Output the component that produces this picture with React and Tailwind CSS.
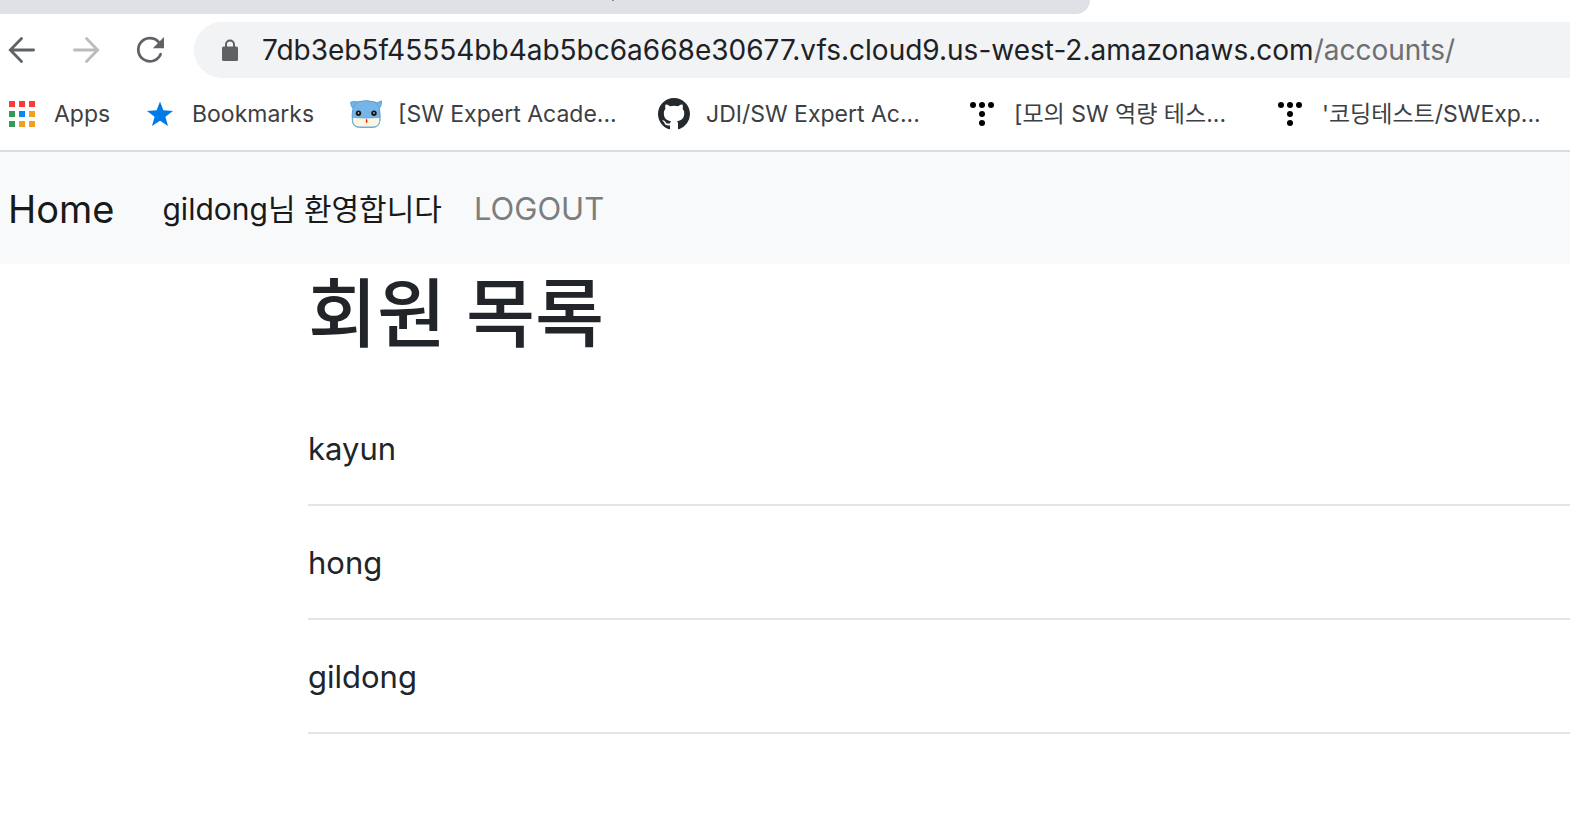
import React from "react";

function BackIcon() {
  return (
    <svg width="28" height="28" viewBox="0 0 28 28" fill="none" stroke="#5f6368" strokeWidth="2.8" strokeLinecap="round">
      <path d="M25.600 14H3M13.500 2.600 2.300 14l11.200 11.400" />
    </svg>
  );
}

function ForwardIcon() {
  return (
    <svg width="28" height="28" viewBox="0 0 28 28" fill="none" stroke="#babcbe" strokeWidth="2.8" strokeLinecap="round">
      <path d="M2.400 14h23M14.500 2.600 25.700 14 14.500 25.400" />
    </svg>
  );
}

function ReloadIcon() {
  return (
    <svg width="28" height="28" viewBox="0 0 28 28" fill="none">
      <path d="M22.4 5.8A11.6 11.6 0 1 0 24.600 18.200" stroke="#5f6368" strokeWidth="2.8" strokeLinecap="round" />
      <path d="M28 1V12.300H16.800Z" fill="#5f6368" />
    </svg>
  );
}

function LockIcon() {
  return (
    <svg width="16" height="22" viewBox="0 0 16 22" fill="none" className="shrink-0">
      <path d="M4 8V5.500a4 4 0 0 1 8 0v2.500" stroke="#5f6164" strokeWidth="2" />
      <rect y="7.500" width="16" height="14.5" rx="1.500" fill="#5f6164" />
    </svg>
  );
}

function AppsIcon() {
  const colors = ["#fa3c36", "#fa3c36", "#fa3c36", "#369b57", "#0d87f5", "#f09f1e", "#369b57", "#f09f1e", "#f09f1e"];
  return (
    <svg width="26" height="26" viewBox="0 0 26 26">
      {colors.map((c, i) => (
        <rect key={i} x={(i % 3) * 10} y={Math.floor(i / 3) * 10} width="6" height="6" fill={c} />
      ))}
    </svg>
  );
}

function StarIcon() {
  return (
    <svg width="26" height="26" viewBox="0 0 26 26">
      <path d="M13 0.5 16.3 9.3 26 9.9 18.4 15.7 21 25 13 19.8 5 25 7.6 15.7 0 9.9 9.7 9.3Z" fill="#007aeb" />
    </svg>
  );
}

function CatIcon() {
  return (
    <svg width="32" height="28" viewBox="0 0 32 28" strokeLinejoin="round">
      <path d="M.6 2.200Q4 1.200 7.500 1.900Q16 -.6 24.500 1.900Q27 3 28 2.600L31.400 .8Q32 5 29.400 8.500Q30.500 15 30 20Q29.500 27.300 23 27.300H9.500Q2.500 27.300 2.400 20Q1.600 14 3 8.600Q.8 6 .6 2.200Z" fill="#76b5e8" stroke="#559fd9" strokeWidth="1" />
      <path d="M2.500 17.500Q16 18.600 29.900 17.500Q30.400 26.900 23 26.900H9.500Q2 26.900 2.500 17.500Z" fill="#fff6df" stroke="#63a9e0" strokeWidth=".8" />
      <path d="M24.500 2Q27.500 4 29 8M7.500 2Q4.500 4 3.200 8" fill="none" stroke="#559fd9" strokeWidth=".8" />
      <circle cx="8.500" cy="13.300" r="2.700" fill="#151515" />
      <circle cx="24" cy="13.300" r="2.700" fill="#151515" />
      <circle cx="8.500" cy="13" r=".8" fill="#fff" />
      <circle cx="24" cy="13" r=".8" fill="#fff" />
      <ellipse cx="16.600" cy="21" rx=".9" ry="2" fill="#e0281e" />
    </svg>
  );
}

function GithubIcon() {
  return (
    <svg width="32" height="32" viewBox="0 0 16 16" fill="#24292e">
      <path d="M8 0C3.58 0 0 3.58 0 8c0 3.54 2.29 6.53 5.47 7.59.4.07.55-.17.55-.38 0-.19-.01-.82-.01-1.49-2.01.37-2.53-.49-2.69-.94-.09-.23-.48-.94-.82-1.13-.28-.15-.68-.52-.01-.53.63-.01 1.08.58 1.23.82.72 1.21 1.87.87 2.33.66.07-.52.28-.87.51-1.07-1.78-.2-3.64-.89-3.64-3.95 0-.87.31-1.59.82-2.15-.08-.2-.36-1.02.08-2.12 0 0 .67-.21 2.2.82.64-.18 1.32-.27 2-.27s1.36.09 2 .27c1.53-1.04 2.2-.82 2.2-.82.44 1.1.16 1.92.08 2.12.51.56.82 1.27.82 2.15 0 3.07-1.87 3.75-3.65 3.95.29.25.54.73.54 1.48 0 1.07-.01 1.93-.01 2.2 0 .21.15.46.55.38A8.01 8.01 0 0 0 16 8c0-4.42-3.58-8-8-8Z" />
    </svg>
  );
}

function DotsIcon() {
  return (
    <svg width="24" height="24" viewBox="0 0 24 24" fill="#000">
      <circle cx="3" cy="3" r="3" />
      <circle cx="12" cy="3" r="3" />
      <circle cx="21" cy="3" r="3" />
      <circle cx="12" cy="12" r="3" />
      <circle cx="12" cy="21" r="3" />
    </svg>
  );
}

function Bookmark({ icon, label, className }) {
  return (
    <a href="#" className={`flex shrink-0 items-center gap-4 whitespace-nowrap ${className}`}>
      <span className="flex w-8 justify-center">{icon}</span>
      {label}
    </a>
  );
}

const members = ["kayun", "hong", "gildong"];

export default function App() {
  return (
    <div className="min-h-screen overflow-x-hidden bg-white font-['Inter','Noto_Sans_CJK_KR',sans-serif] text-[#212529]">
      <header className="border-b-2 border-[#dadce0]">
        <div className="h-3.5 w-[1090px] max-w-full rounded-br-2xl bg-[#dee1e6] pl-[612px]">
          <div className="h-px w-0.5 bg-[#85888c]" />
        </div>
        <div className="flex items-center pt-2 pl-2">
          <button type="button" aria-label="Back" className="mr-9"><BackIcon /></button>
          <button type="button" aria-label="Forward" className="mr-9"><ForwardIcon /></button>
          <button type="button" aria-label="Reload" className="mr-[30px]"><ReloadIcon /></button>
          <label className="flex h-14 min-w-0 flex-1 items-center rounded-l-full bg-[#f1f3f4] pl-7 text-[28px] whitespace-nowrap text-[#202124]">
            <LockIcon />
            <input
              type="text"
              aria-label="Address"
              defaultValue="7db3eb5f45554bb4ab5bc6a668e30677.vfs.cloud9.us-west-2.amazonaws.com"
              className="ml-6 [field-sizing:content] bg-transparent outline-none"
            />
            <span className="text-[#6d6f72]">/accounts/</span>
          </label>
        </div>
        <nav aria-label="Bookmarks" className="flex h-[72px] items-center overflow-hidden pl-1.5 text-[23px] text-[#3c4043]">
          <Bookmark icon={<AppsIcon />} label="Apps" className="w-[138px]" />
          <Bookmark icon={<StarIcon />} label="Bookmarks" className="w-[206px]" />
          <Bookmark icon={<CatIcon />} label="[SW Expert Acade..." className="w-[308px]" />
          <Bookmark icon={<GithubIcon />} label="JDI/SW Expert Ac..." className="w-[308px]" />
          <Bookmark icon={<DotsIcon />} label="[모의 SW 역량 테스..." className="w-[308px]" />
          <Bookmark icon={<DotsIcon />} label="'코딩테스트/SWExp..." className="" />
        </nav>
      </header>
      <nav aria-label="Main" className="flex h-28 items-center bg-[#f8f9fa] pt-0.5 pl-2 text-[31px] text-[#19191a]">
        <a href="#" className="mr-12 text-[38px]">Home</a>
        <a href="#" className="mr-8 text-[30px]">gildong님 환영합니다</a>
        <a href="#" className="text-[#7c7d7d]">LOGOUT</a>
      </nav>
      <main className="pl-[308px]">
        <h1 className="pt-0.5 text-[75px] leading-24 font-medium">회원 목록</h1>
        <ul className="pt-[30px] text-[31px]">
          {members.map((name) => (
            <li key={name} className="flex h-[114px] items-center border-b-2 border-[#e5e5e5] pt-0.5">{name}</li>
          ))}
        </ul>
      </main>
    </div>
  );
}
